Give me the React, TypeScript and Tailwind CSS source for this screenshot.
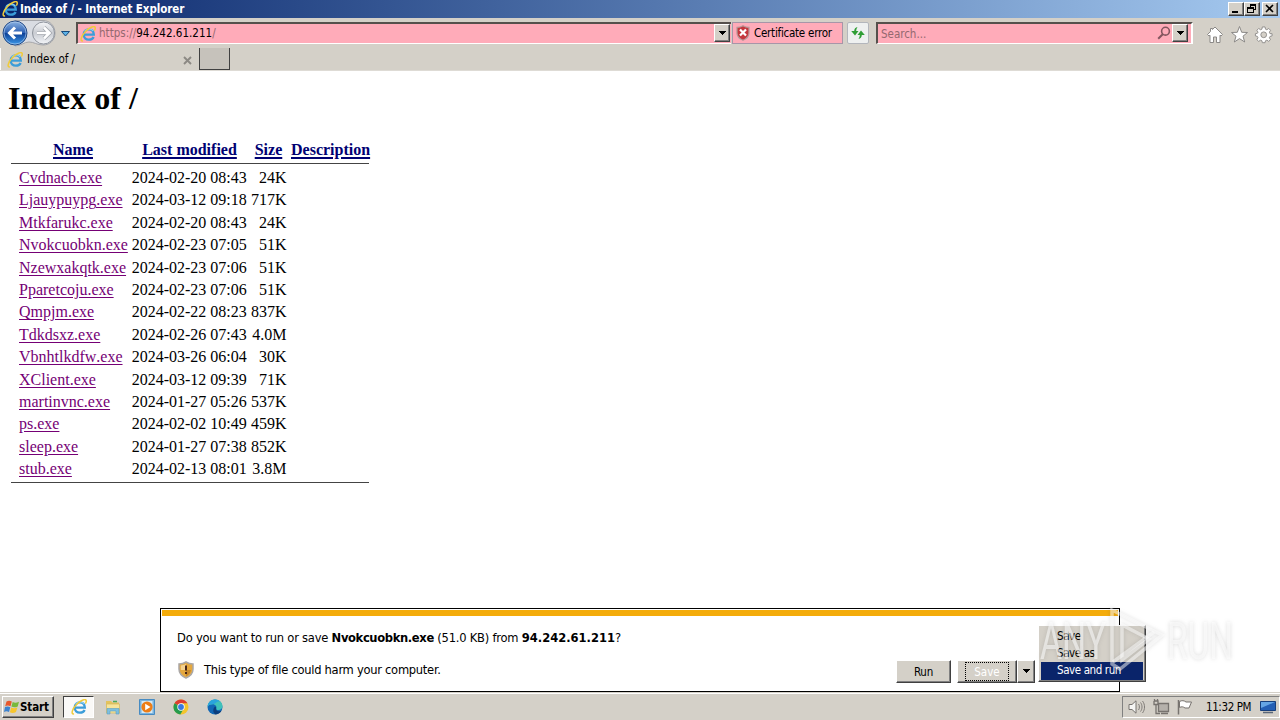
import React from 'react';

const files = [
  { name: 'Cvdnacb.exe', modified: '2024-02-20 08:43', size: '24K' },
  { name: 'Ljauypuypg.exe', modified: '2024-03-12 09:18', size: '717K' },
  { name: 'Mtkfarukc.exe', modified: '2024-02-20 08:43', size: '24K' },
  { name: 'Nvokcuobkn.exe', modified: '2024-02-23 07:05', size: '51K' },
  { name: 'Nzewxakqtk.exe', modified: '2024-02-23 07:06', size: '51K' },
  { name: 'Pparetcoju.exe', modified: '2024-02-23 07:06', size: '51K' },
  { name: 'Qmpjm.exe', modified: '2024-02-22 08:23', size: '837K' },
  { name: 'Tdkdsxz.exe', modified: '2024-02-26 07:43', size: '4.0M' },
  { name: 'Vbnhtlkdfw.exe', modified: '2024-03-26 06:04', size: '30K' },
  { name: 'XClient.exe', modified: '2024-03-12 09:39', size: '71K' },
  { name: 'martinvnc.exe', modified: '2024-01-27 05:26', size: '537K' },
  { name: 'ps.exe', modified: '2024-02-02 10:49', size: '459K' },
  { name: 'sleep.exe', modified: '2024-01-27 07:38', size: '852K' },
  { name: 'stub.exe', modified: '2024-02-13 08:01', size: '3.8M' },
];

const raised =
  'border border-t-white border-l-white border-r-[#404040] border-b-[#404040] bg-[#d4d0c8] shadow-[inset_-1px_-1px_0_#808080]';

const IeLogo = ({ className }: { className: string }) => (
  <svg viewBox="0 0 16 16" className={`block shrink-0 ${className}`} fill="none">
    <path d="M4 8.600H13.800C13.600 5.200 11.700 3.400 8.900 3.400C5.900 3.400 3.700 5.500 3.700 8.600C3.700 11.700 5.900 13.700 8.900 13.700C11.200 13.700 12.900 12.700 13.600 11" stroke="#3c9dd9" strokeWidth="2.300" />
    <path d="M4.500 5.300C5.500 3.700 7 3 9 3C10.800 3 12.300 3.700 13.200 5" stroke="#8bd0f4" strokeWidth="1.200" />
    <path d="M3 14.800C-.4 15.600 1.200 9.900 5.300 5.700C9.300 1.500 14.200-.5 15.100 1.300C15.500 2.200 15 3.600 14.300 4.700" stroke="#f0cb3a" strokeWidth="1.500" />
  </svg>
);

const Caret = () => (
  <svg viewBox="0 0 8 4" className="block h-1 w-2" shapeRendering="crispEdges">
    <path d="M0 0H8L4 4Z" fill="#000" />
  </svg>
);

const TitleBar = () => (
  <header className="flex h-[18px] items-center bg-linear-to-r from-[#0a246a] to-[#a6caf0] pr-[2px] pl-[2px]">
    <IeLogo className="h-4 w-4" />
    <span className="flex-1 pl-[2px] text-[11.5px] leading-[16px] font-bold tracking-[-0.08px] whitespace-nowrap text-white">
      Index of / - Internet Explorer
    </span>
    <div className={`flex h-[14px] w-4 items-end justify-start pb-[2px] pl-[3px] ${raised}`}>
      <i className="h-[2px] w-[6px] bg-black" />
    </div>
    <div className={`h-[14px] w-4 ${raised}`}>
      <svg viewBox="0 0 14 12" className="block h-3 w-[14px]" shapeRendering="crispEdges" fill="none" stroke="#000">
        <path d="M5.500 4V1.500H10.500V6.500H9M5 2.500H11M2.500 4.500H8.500V9.500H2.500ZM2 5.500H9" />
      </svg>
    </div>
    <div className={`ml-[2px] h-[14px] w-4 ${raised}`}>
      <svg viewBox="0 0 14 12" className="block h-3 w-[14px]" fill="none" stroke="#000" strokeWidth="1.600">
        <path d="M3 2L10 9M10 2L3 9" />
      </svg>
    </div>
  </header>
);

const NavButtons = () => (
  <svg viewBox="0 0 76 30" className="block h-[30px] w-[76px] shrink-0">
    <defs>
      <linearGradient id="back" x1="0" y1="0" x2="0" y2="1">
        <stop offset="0" stopColor="#8db4e3" />
        <stop offset=".48" stopColor="#2f62b4" />
        <stop offset=".5" stopColor="#0c3f96" />
        <stop offset="1" stopColor="#3e9bea" />
      </linearGradient>
      <linearGradient id="forward" x1="0" y1="0" x2="0" y2="1">
        <stop offset="0" stopColor="#f5f6f8" />
        <stop offset=".5" stopColor="#c9ccd2" />
        <stop offset="1" stopColor="#f3f5f8" />
      </linearGradient>
    </defs>
    <path d="M15 2.500H43C50 2.500 55 8 55 15C55 22 50 27 43 27C37 27 34 24 29 24C24 24 21 28 15 28Z" fill="#d9dce2" stroke="#a5a6aa" />
    <circle cx="15" cy="15" r="12" fill="url(#back)" stroke="#244a85" />
    <circle cx="15" cy="15" r="11" fill="none" stroke="#b9d2f0" strokeOpacity=".6" />
    <circle cx="43.500" cy="15" r="11" fill="url(#forward)" stroke="#8f949d" />
    <path d="M22 15H10M15 9.500L9.500 15L15 20.500" fill="none" stroke="#fff" strokeWidth="3" />
    <path d="M37 15H49M44 9.500L49.500 15L44 20.500" fill="none" stroke="#9fa3aa" strokeWidth="4" />
    <path d="M37 15H49M44 9.500L49.500 15L44 20.500" fill="none" stroke="#fff" strokeWidth="2.600" />
    <path d="M61.500 13.500H69.500L65.500 18Z" fill="#5cb3e8" stroke="#174a7c" />
  </svg>
);

const AddressRow = () => (
  <div className="flex h-[30px] items-center">
    <NavButtons />
    <div className="flex h-[22px] w-[655px] items-center border-t-2 border-l-2 border-b border-t-[#55504c] border-l-[#55504c] border-b-white bg-[#ffabb9] pl-[2px]">
      <IeLogo className="h-4 w-4" />
      <span className="flex-1 pt-px pl-[3px] text-[11.5px] tracking-[0.02px] whitespace-nowrap text-[#94686f]">
        https://<span className="text-black">94.242.61.211</span>/
      </span>
      <div className={`-mt-px mr-px flex h-[18px] w-4 items-center justify-center ${raised}`}>
        <Caret />
      </div>
    </div>
    <div className="ml-[1px] flex h-[22px] w-[111px] items-center border border-[#a795a8] bg-[#ffabb9] pl-[3px]">
      <svg viewBox="0 0 14 16" className="block h-4 w-[14px]">
        <path d="M7 .7C9 2 11 2.400 13 2.400V8C13 11.500 10 14 7 15.300C4 14 1 11.500 1 8V2.400C3 2.400 5 2 7 .7Z" fill="#c5373d" stroke="#b39a9a" strokeWidth="1.200" />
        <path d="M4 4.500L10 10.500M10 4.500L4 10.500" stroke="#fff" strokeWidth="2.200" />
      </svg>
      <span className="pt-[2px] pl-[4px] text-[11.5px] tracking-[-0.25px] whitespace-nowrap">Certificate error</span>
    </div>
    <div className="ml-1 flex h-[22px] w-[22px] items-center justify-center rounded-[2px] border border-[#b3b6bc] bg-[#eef0f0]">
      <svg viewBox="0 0 16 16" className="block h-4 w-4" fill="#2f9e35">
        <path d="M7.500 2C5.500 2.300 4.300 3.800 4.200 6H1.200L5 10.500L8.500 6H6.200C6.200 4.600 6.700 3.500 7.500 2Z" />
        <path d="M8.500 14C10.500 13.700 11.700 12.200 11.800 10H14.800L11 5.500L7.500 10H9.800C9.800 11.400 9.300 12.500 8.500 14Z" />
      </svg>
    </div>
    <div className="ml-[7px] flex h-[22px] w-[317px] items-center border-t-2 border-l-2 border-r-2 border-b border-t-[#55504c] border-r-white border-b-white border-l-[#55504c] bg-[#ffabb9] pr-[3px] pl-[3px]">
      <span className="flex-1 pt-[2px] text-[11.5px] tracking-[-0.02px] text-[#94686f]">Search...</span>
      <svg viewBox="0 0 14 14" className="-mt-px mr-[1px] block h-[14px] w-[14px]" fill="none" stroke="#83555e" strokeWidth="1.600">
        <circle cx="8.500" cy="5.200" r="3.900" />
        <path d="M6 8L1.200 12.800" strokeWidth="2" />
      </svg>
      <div className={`-mt-px flex h-[18px] w-4 items-center justify-center ${raised}`}>
        <Caret />
      </div>
    </div>
    <svg viewBox="0 0 68 20" className="mt-1 ml-[13px] block h-5 w-[68px]" fill="#fff" stroke="#8b8987" strokeWidth="1">
      <path d="M9 2L16.500 9.500L15 11L14 10.200V17.500H10.500V12H7.500V17.500H4V10.200L3 11L1.500 9.500L4.500 6.500V3.500H6.500V4.500Z" />
      <path d="M33.500 1.500L35.700 7.300L41.500 7.500L37 11.200L38.700 17L33.500 13.600L28.300 17L30 11.200L25.500 7.500L31.300 7.300Z" />
      <g transform="translate(5.500 .6) scale(.9)">
        <path d="M56.500 1.500H59.500L60 4L61.500 4.600L63.600 3.200L65.600 5.200L64.300 7.300L65 9H67.300V11.500L65 12L64.300 13.500L65.600 15.600L63.600 17.500L61.500 16.200L60 16.800L59.500 19H56.500L56 16.800L54.500 16.200L52.400 17.500L50.400 15.600L51.700 13.500L51 12L48.800 11.500V9L51 8.500L51.700 7.300L50.400 5.200L52.400 3.200L54.500 4.600L56 4Z" />
        <circle cx="58" cy="10.200" r="3.200" fill="#d4d0c8" />
      </g>
    </svg>
  </div>
);

const TabRow = () => (
  <div className="flex h-[23px] items-start border-b border-[#dedbd5]">
    <div className="flex h-[22px] w-[199px] items-center border-l border-white pr-[5px] pl-[6px]">
      <IeLogo className="mt-px h-4 w-4" />
      <span className="flex-1 pt-[2px] pl-[4px] text-[11.5px] tracking-[-0.05px]">Index of /</span>
      <svg viewBox="0 0 9 9" className="mt-[2px] mr-[2px] block h-[9px] w-[9px]" stroke="#8c8984" strokeWidth="1.900">
        <path d="M1 1L8 8M8 1L1 8" />
      </svg>
    </div>
    <div className="h-[22px] w-[31px] border-r border-b border-l border-[#404040] bg-[#c6c2bb]" />
  </div>
);

const DirectoryListing = () => (
  <main className="h-[621px] bg-white px-2 pt-[9px] font-['Liberation_Serif',serif] text-base text-black [font-kerning:none]">
    <h1 className="h-[37px] text-[32px] leading-[36px] font-bold">Index of /</h1>
    <div className="ml-[3px] w-[358px] pt-[22px]">
      <div className="grid h-[25px] grid-cols-[124px_109px_49px_76px] border-b border-[#444] text-center leading-[22px] font-bold whitespace-nowrap text-[#000072]">
        <a className="underline decoration-2 underline-offset-2">Name</a>
        <a className="underline decoration-2 underline-offset-2">Last modified</a>
        <a className="underline decoration-2 underline-offset-2">Size</a>
        <a className="-ml-[2px] underline decoration-2 underline-offset-2">Description</a>
      </div>
      <div className="border-b border-[#444] pt-[3px] pb-[2px]">
        {files.map((file) => (
          <div key={file.name} className="grid h-[22.400px] grid-cols-[113px_116px_38.500px] pl-2 leading-[22.400px] whitespace-nowrap">
            <a className="text-[#750075] underline underline-offset-2">{file.name}</a>
            <span className="-ml-[0.3px]">{file.modified}</span>
            <span className="text-right">{file.size}</span>
          </div>
        ))}
      </div>
    </div>
  </main>
);

const DownloadBar = () => (
  <section className="absolute top-[608px] left-[160px] flex h-[84px] w-[960px] flex-col border border-black bg-white">
    <div className="mx-px mt-px h-[6px] shrink-0 bg-[#f4ac0b]" />
    <p className="pt-[14px] pl-4 text-[12.800px] leading-4 tracking-[-0.22px] whitespace-nowrap">
      Do you want to run or save <b className="tracking-[-0.35px]">Nvokcuobkn.exe</b> (51.0 KB) from{' '}
      <b className="tracking-[0px]">94.242.61.211</b>?
    </p>
    <div className="mt-[11px] flex h-[26px] items-center pl-[17px]">
      <svg viewBox="0 0 16 18" className="block h-[18px] w-4">
        <path d="M8 1C10 2.300 12.500 3 15 3V8C15 12.500 11.500 15.500 8 17C4.500 15.500 1 12.500 1 8V3C3.500 3 6 2.300 8 1Z" fill="#e5a83e" stroke="#aaa7a6" strokeWidth="1.500" />
        <path d="M8 3C6 4 4.500 4.300 2.800 4.400V9H8Z" fill="#f5d391" />
        <path d="M8 9H13C12.600 12 10.600 14 8 15.300Z" fill="#c7882b" />
        <path d="M8 4.500V9.500M8 11V13" stroke="#482617" strokeWidth="2" />
      </svg>
      <span className="flex-1 pl-[10px] text-[12.800px] tracking-[-0.28px]">This type of file could harm your computer.</span>
      <button className={`mt-[2px] h-[23px] w-[55px] pt-[2px] text-[11.5px] leading-[18px] tracking-[-0.2px] ${raised}`}>Run</button>
      <button className={`mt-[2px] ml-[6px] flex h-[23px] w-[60px] items-center justify-center text-[11.5px] text-white ${raised}`}>
        <span className="h-[19px] w-[44px] border border-dotted border-black leading-[18px]">Save</span>
      </button>
      <button className={`mt-[2px] mr-[84px] flex h-[23px] w-[18px] items-center justify-center ${raised}`}>
        <Caret />
      </button>
    </div>
  </section>
);

const SaveMenu = () => (
  <ul className={`absolute top-[625px] left-[1038px] h-[57px] w-[108px] p-[2px] text-[11.5px] leading-[17px] tracking-[-0.4px] ${raised}`}>
    <li className="pl-4">Save</li>
    <li className="pl-4">Save as</li>
    <li className="h-[18px] bg-[#0a246a] pl-4 text-white">Save and run</li>
  </ul>
);

const Watermark = () => (
  <svg viewBox="0 0 210 80" className="absolute top-[600px] left-[1030px] block h-20 w-[210px] overflow-visible drop-shadow-[0_0_2px_rgba(80,80,80,0.35)]">
    <g fill="#fff" fillOpacity=".55" fontFamily="Roboto, sans-serif" fontSize="51" fontWeight="400">
      <text x="10" y="59" textLength="66" lengthAdjust="spacingAndGlyphs">ANY</text>
      <text x="137" y="59" textLength="66" lengthAdjust="spacingAndGlyphs">RUN</text>
    </g>
    <g fill="none" stroke="#fff" strokeOpacity=".5" strokeWidth="3.500">
      <path d="M82 24V64L90 69L132 35L82 10Z" />
      <path d="M92 25V60L119 39Z" />
      <path d="M83 62L124 32" />
    </g>
  </svg>
);

const Taskbar = () => (
  <footer className="flex h-7 items-center border-t border-[#d4d0c8] bg-[#d4d0c8] pt-px pl-[2px] shadow-[inset_0_1px_0_#fff]">
    <div className={`flex h-[22px] w-[52px] items-center pl-px ${raised}`}>
      <svg viewBox="0 0 16 16" className="block h-4 w-4 shrink-0">
        <path d="M2.500 2.500C4.500 1.300 6 1.500 7.800 2.600L6.500 7.300C4.700 6.200 3 6.200 1.200 7.200Z" fill="#e8582b" />
        <path d="M8.700 3C10.600 4 12.300 4 15 2.700L13.700 7.400C11.500 8.500 9.500 8.500 7.400 7.500Z" fill="#78b93c" />
        <path d="M1 8.100C2.900 7.100 4.500 7.200 6.300 8.200L5 13C3.100 11.900 1.700 12 0 13Z" fill="#3d83cf" />
        <path d="M7.200 8.500C9.300 9.500 11.300 9.400 13.400 8.400L12 13C9.900 14.100 8 14.300 5.900 13.300Z" fill="#f7c62e" />
      </svg>
      <span className="pt-[2px] text-[11.5px] font-bold tracking-[-0.1px]">Start</span>
    </div>
    <div className="ml-[9px] flex h-[22px] w-[31px] items-center justify-center border border-t-[#404040] border-r-white border-b-white border-l-[#404040] bg-[#faf9f7]">
      <IeLogo className="h-4 w-4" />
    </div>
    <svg viewBox="0 0 16 16" className="ml-[11px] block h-4 w-4">
      <path d="M1 2H6L7.500 3.500H14V8H1Z" fill="#e4c35c" />
      <path d="M1.500 5H14.500V14H1.500Z" fill="#f7e49a" stroke="#d3b85e" strokeWidth=".7" />
      <path d="M2 15V9.500H14V15H11V12H5V15Z" fill="#7ebfdf" stroke="#5a9dc3" strokeWidth=".6" />
      <path d="M8 2.500H12" stroke="#4aa85d" strokeWidth="1.500" />
    </svg>
    <svg viewBox="0 0 16 16" className="ml-[18px] block h-4 w-4">
      <path d="M.5 .5H15.500V15.500H.5Z" fill="#79b3de" stroke="#478bc2" />
      <path d="M2.500 2H13.500V14H2.500Z" fill="#d5e9f5" />
      <circle cx="8" cy="8" r="5.600" fill="#ed7d16" />
      <path d="M6.200 4.700L11.500 8L6.200 11.300Z" fill="#fff" />
    </svg>
    <svg viewBox="0 0 16 16" className="ml-[18px] block h-4 w-4">
      <circle cx="8" cy="8" r="7.500" fill="#f3c52d" />
      <path d="M8 8L1.500 4.200A7.500 7.500 0 0 1 14.500 4.300H8Z" fill="#dd3e32" />
      <path d="M8 8L1.500 4.200A7.500 7.500 0 0 0 7.300 15.500L10.500 10Z" fill="#259b4d" />
      <circle cx="8" cy="8" r="3.700" fill="#fff" />
      <circle cx="8" cy="8" r="2.900" fill="#3979e0" />
    </svg>
    <svg viewBox="0 0 16 16" className="ml-[18px] block h-4 w-4">
      <circle cx="8" cy="8" r="7.500" fill="#1267b5" />
      <path d="M.6 7.500C1 3.300 4.100 .5 8 .5C12.500 .5 15.500 3.800 15.500 7.300C15.500 9.700 13.600 11 11.500 11C9.700 11 9 10.300 9.200 9.500C10.200 7.500 8.300 5.200 5.500 5.200C3.400 5.200 1.600 6 .6 7.500Z" fill="#3fc1ba" />
      <path d="M.6 7.500C1 3.300 4.100 .5 8 .5C10 .5 11.600 1.200 12.900 2.300C8.500 2.500 9 5 5.500 5.200C3.400 5.200 1.600 6 .6 7.500Z" fill="#2aa4dc" />
      <path d="M9.200 9.500C8.500 10.500 9.700 12.300 12 12.300C13.200 12.300 14 12 14.700 11.600C13.500 13.900 11 15.400 8.700 15.500C5.700 14 5.500 10 8 7.500C8.800 7.900 9.300 8.700 9.200 9.500Z" fill="#0c3d7c" />
    </svg>
    <div className="ml-auto flex h-[22px] w-[158px] items-center border border-t-[#808080] border-r-white border-b-white border-l-[#808080] pl-[5px]">
      <svg viewBox="0 0 68 16" className="block h-4 w-[68px] shrink-0" fill="none" stroke="#77736f">
        <path d="M1 5.500H4L8 1.800V14.200L4 10.500H1Z" fill="#f5f5f3" />
        <path d="M10.500 5C11.700 6.500 11.700 9.500 10.500 11M12.500 3.500C14.500 6 14.500 10 12.500 12.500M14.500 2C17.200 5.500 17.200 10.500 14.500 14" strokeWidth=".9" />
        <path d="M30.500 4.500H40.500V12.500H30.500ZM33 14.500H40" fill="#b5b1ab" strokeWidth="1.300" />
        <path d="M26 2V5.500H30V2H26M28 6V14.500H32M26.500 0V2M29.500 0V2" strokeWidth="1.300" />
        <path d="M50.500 1V15.500" strokeWidth="1.500" />
        <path d="M51.500 2.500C54 1.200 56 1.500 58 3H63.500L61 9H57C55 7.500 53.500 7.500 51.500 8.500Z" fill="#fff" />
      </svg>
      <span className="ml-[10px] w-[46px] pt-[2px] text-[11.5px] tracking-[-0.4px] whitespace-nowrap">11:32 PM</span>
      <svg viewBox="0 0 16 14" className="ml-[8px] block h-[14px] w-4">
        <path d="M.5 1.500H15.500V10.500H.5Z" fill="#245fb5" stroke="#173f7c" />
        <path d="M1 2H15L1 8Z" fill="#65a5e5" />
        <path d="M3 12.500H13" stroke="#5a6778" strokeWidth="1.500" />
      </svg>
    </div>
  </footer>
);

const App: React.FC = () => {
  return (
    <div className="relative flex h-[720px] w-[1280px] flex-col overflow-hidden bg-[#d4d0c8] font-['DejaVu_Sans_Condensed','DejaVu_Sans',sans-serif] text-black">
      <TitleBar />
      <AddressRow />
      <TabRow />
      <DirectoryListing />
      <Taskbar />
      <DownloadBar />
      <SaveMenu />
      <Watermark />
    </div>
  );
};

export default App;
